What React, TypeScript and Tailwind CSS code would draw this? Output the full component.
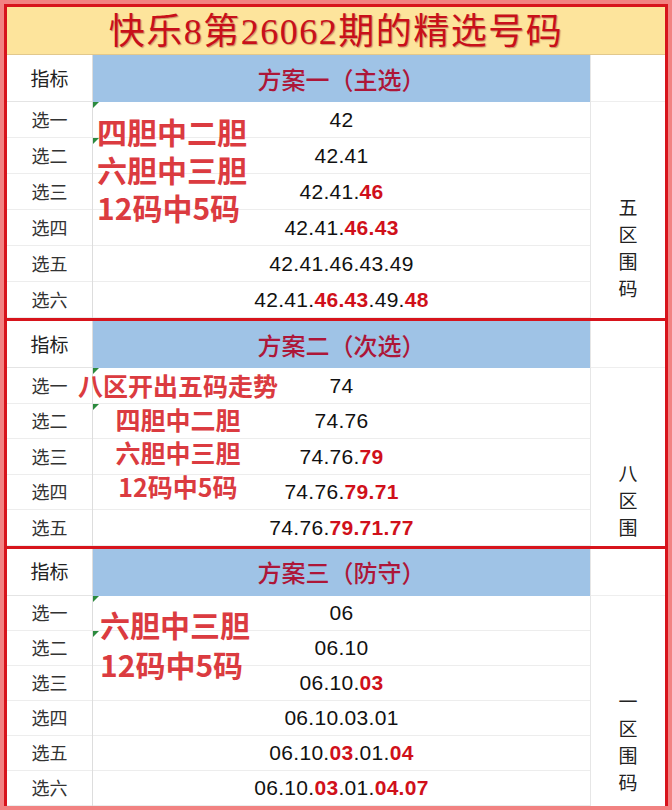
import React from 'react';

type Row = { label: string; value: string };

type Plan = {
    title: string;
    side: string;
    rowH: string;
    sideH: string;
    rows: Row[];
    overlay: string[];
    overlayClass: string;
};

// value strings use * to toggle red bold parts
const plans: Plan[] = [
    {
        title: '方案一（主选）',
        side: '五区围码',
        rowH: 'h-[36px]',
        sideH: 'h-[216px]',
        rows: [
            { label: '选一', value: '42' },
            { label: '选二', value: '42.41' },
            { label: '选三', value: '42.41.*46*' },
            { label: '选四', value: '42.41.*46.43*' },
            { label: '选五', value: '42.41.46.43.49' },
            { label: '选六', value: '42.41.*46.43*.49.*48*' },
        ],
        overlay: ['四胆中二胆', '六胆中三胆', '12码中5码'],
        overlayClass: 'left-[90px] top-[57px] text-[30px] leading-[38px] text-left',
    },
    {
        title: '方案二（次选）',
        side: '八区围码',
        rowH: 'h-[35.5px]',
        sideH: 'h-[177.5px]',
        rows: [
            { label: '选一', value: '74' },
            { label: '选二', value: '74.76' },
            { label: '选三', value: '74.76.*79*' },
            { label: '选四', value: '74.76.*79.71*' },
            { label: '选五', value: '74.76.*79.71.77*' },
        ],
        overlay: ['八区开出五码走势', '四胆中二胆', '六胆中三胆', '12码中5码'],
        overlayClass: 'left-[61px] w-[220px] top-[48px] text-[25px] leading-[33.5px] text-center',
    },
    {
        title: '方案三（防守）',
        side: '一区围码',
        rowH: 'h-[35px]',
        sideH: 'h-[210px]',
        rows: [
            { label: '选一', value: '06' },
            { label: '选二', value: '06.10' },
            { label: '选三', value: '06.10.*03*' },
            { label: '选四', value: '06.10.03.01' },
            { label: '选五', value: '06.10.*03*.01.*04*' },
            { label: '选六', value: '06.10.*03*.01.*04.07*' },
        ],
        overlay: ['六胆中三胆', '12码中5码'],
        overlayClass: 'left-[93px] top-[55px] text-[30px] leading-[40px] text-left',
    },
];

function Value({ v }: { v: string }) {
    const parts = v.split('*');
    return (
        <span className="font-['Liberation_Sans',Arial,sans-serif] text-[21px] tracking-[0.3px] text-[#111]">
            {parts.map((p, i) =>
                i % 2 === 1 ? (
                    <span key={i} className="font-bold text-[#d0101a]">{p}</span>
                ) : (
                    <span key={i}>{p}</span>
                )
            )}
        </span>
    );
}

function Marker() {
    return (
        <span className="absolute left-0 top-0 w-0 h-0 border-t-[6px] border-t-[#2b8a3e] border-r-[6px] border-r-transparent" />
    );
}

function Section({ plan, last }: { plan: Plan; last: boolean }) {
    return (
        <div className={`relative flex ${last ? '' : 'border-b-[3px] border-[#d7141c]'}`}>
            <div className="w-[86px] flex flex-col border-r border-[#dddddd]">
                <div className="h-[47px] flex items-center justify-center border-b border-[#e4e4e4] text-[19px] text-[#222]">
                    指标
                </div>
                {plan.rows.map((r) => (
                    <div
                        key={r.label}
                        className={`${plan.rowH} flex items-center justify-center border-b border-[#ededed] text-[18px] text-[#333]`}
                    >
                        {r.label}
                    </div>
                ))}
            </div>

            <div className="w-[497px] flex flex-col">
                <div className="h-[47px] bg-[#9fc3e6] flex items-center justify-center text-[24px] font-medium text-[#ad1638]">
                    {plan.title}
                </div>
                {plan.rows.map((r, i) => (
                    <div
                        key={r.label}
                        className={`${plan.rowH} relative flex items-center justify-center border-b border-[#ededed]`}
                    >
                        {i < 2 && <Marker />}
                        <Value v={r.value} />
                    </div>
                ))}
            </div>

            <div className="w-[75px] flex flex-col border-l border-[#e6e6e6]">
                <div className="h-[47px] border-b border-[#eeeeee]" />
                <div className={`${plan.sideH} overflow-hidden pt-[91px] flex flex-col items-center text-[19px] leading-[27px] text-[#222]`}>
                    {plan.side.split('').map((c, i) => (
                        <span key={i}>{c}</span>
                    ))}
                </div>
            </div>

            <div className={`absolute font-bold text-[#db3b40] ${plan.overlayClass}`}>
                {plan.overlay.map((l) => (
                    <div key={l}>{l}</div>
                ))}
            </div>
        </div>
    );
}

export default function App() {
    return (
        <div className="w-[672px] h-[810px] overflow-hidden bg-white border-[4px] border-[#f28282] font-['Noto_Sans_CJK_SC',sans-serif]">
            <div className="border-[3px] border-[#d7141c] bg-white">
                <div className="h-[48px] bg-[#fde49c] border-b border-[#e2c88c] flex items-center justify-center pt-[3px]">
                    <h1 className="font-['Liberation_Serif','Noto_Sans_CJK_SC',serif] text-[36px] font-normal leading-none text-[#c8101a] tracking-[1.5px] [text-shadow:1px_1px_1px_rgba(110,0,0,0.35)]">
                        快乐8第26062期的精选号码
                    </h1>
                </div>
                {plans.map((p, i) => (
                    <Section key={p.title} plan={p} last={i === plans.length - 1} />
                ))}
            </div>
        </div>
    );
}
